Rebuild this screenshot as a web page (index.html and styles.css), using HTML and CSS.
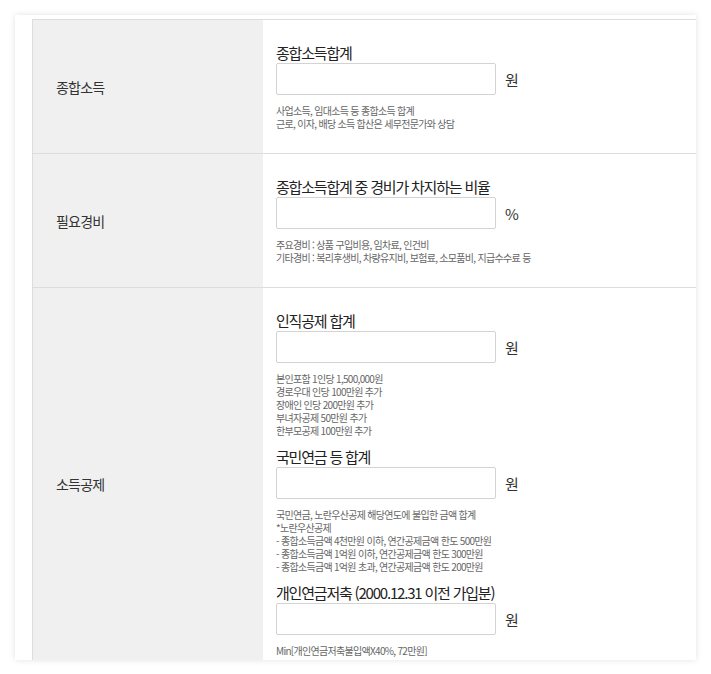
FILE: index.html
```html
<!DOCTYPE html>
<html lang="ko">
<head>
  <meta charset="UTF-8">
  <meta name="viewport" content="width=device-width, initial-scale=1.0">
  <title>종합소득세 계산</title>
  <link rel="stylesheet" href="styles.css">
</head>
<body>
  <div class="card">
    <div class="calc">
      <div class="row">
        <div class="label">종합소득</div>
        <div class="fields">
          <div class="field">
            <div class="field-title">종합소득합계</div>
            <div class="input-line">
              <input type="text" class="num-input">
              <span class="unit">원</span>
            </div>
            <p class="help">사업소득, 임대소득 등 종합소득 합계<br>근로, 이자, 배당 소득 합산은 세무전문가와 상담</p>
          </div>
        </div>
      </div>

      <div class="row">
        <div class="label">필요경비</div>
        <div class="fields">
          <div class="field">
            <div class="field-title">종합소득합계 중 경비가 차지하는 비율</div>
            <div class="input-line">
              <input type="text" class="num-input">
              <span class="unit">%</span>
            </div>
            <p class="help">주요경비 : 상품 구입비용, 임차료, 인건비<br>기타경비 : 복리후생비, 차량유지비, 보험료, 소모품비, 지급수수료 등</p>
          </div>
        </div>
      </div>

      <div class="row">
        <div class="label">소득공제</div>
        <div class="fields">
          <div class="field">
            <div class="field-title">인직공제 합계</div>
            <div class="input-line">
              <input type="text" class="num-input">
              <span class="unit">원</span>
            </div>
            <p class="help">본인포함 1인당 1,500,000원<br>경로우대 인당 100만원 추가<br>장애인 인당 200만원 추가<br>부녀자공제 50만원 추가<br>한부모공제 100만원 추가</p>
          </div>
          <div class="field">
            <div class="field-title">국민연금 등 합계</div>
            <div class="input-line">
              <input type="text" class="num-input">
              <span class="unit">원</span>
            </div>
            <p class="help">국민연금, 노란우산공제 해당연도에 불입한 금액 합계<br>*노란우산공제<br>- 종합소득금액 4천만원 이하, 연간공제금액 한도 500만원<br>- 종합소득금액 1억원 이하, 연간공제금액 한도 300만원<br>- 종합소득금액 1억원 초과, 연간공제금액 한도 200만원</p>
          </div>
          <div class="field">
            <div class="field-title">개인연금저축 (2000.12.31 이전 가입분)</div>
            <div class="input-line">
              <input type="text" class="num-input">
              <span class="unit">원</span>
            </div>
            <p class="help">Min[개인연금저축불입액X40%, 72만원]</p>
          </div>
        </div>
      </div>
    </div>
  </div>
</body>
</html>
```

FILE: styles.css
```css
body {
  margin: 0;
  padding: 15px;
  background: #fff;
  font-family: "Noto Sans CJK KR", "Noto Sans", sans-serif;
  color: #333;
}

.card {
  width: 681px;
  height: 645px;
  box-sizing: border-box;
  padding: 4px 0 0 17px;
  background: #fff;
  box-shadow: 0 0 6px rgba(0, 0, 0, 0.12);
  overflow: hidden;
}

.calc {
  border-top: 1px solid #ddd;
  border-left: 1px solid #ddd;
}

.row {
  display: grid;
  grid-template-columns: 230px 1fr;
  border-bottom: 1px solid #ddd;
}

.label {
  display: flex;
  align-items: center;
  padding-left: 23px;
  background: #f0f0f0;
  font-size: 14px;
  letter-spacing: -0.8px;
  color: #333;
}

.fields {
  padding: 23px 0 23px 13px;
}

.field + .field {
  margin-top: 10px;
}

.field-title {
  font-size: 15px;
  line-height: 20px;
  letter-spacing: -1.2px;
  color: #222;
}

.input-line {
  display: flex;
  align-items: center;
}

.num-input {
  width: 220px;
  height: 32px;
  box-sizing: border-box;
  border: 1px solid #d3d3d3;
  border-radius: 2px;
  padding: 0 8px;
  margin: 0;
  font-family: inherit;
}

.unit {
  margin-left: 9px;
  font-size: 15px;
  color: #333;
}

.help {
  margin: 9px 0 0;
  font-size: 10px;
  line-height: 13px;
  letter-spacing: -0.7px;
  color: #666;
}
```
